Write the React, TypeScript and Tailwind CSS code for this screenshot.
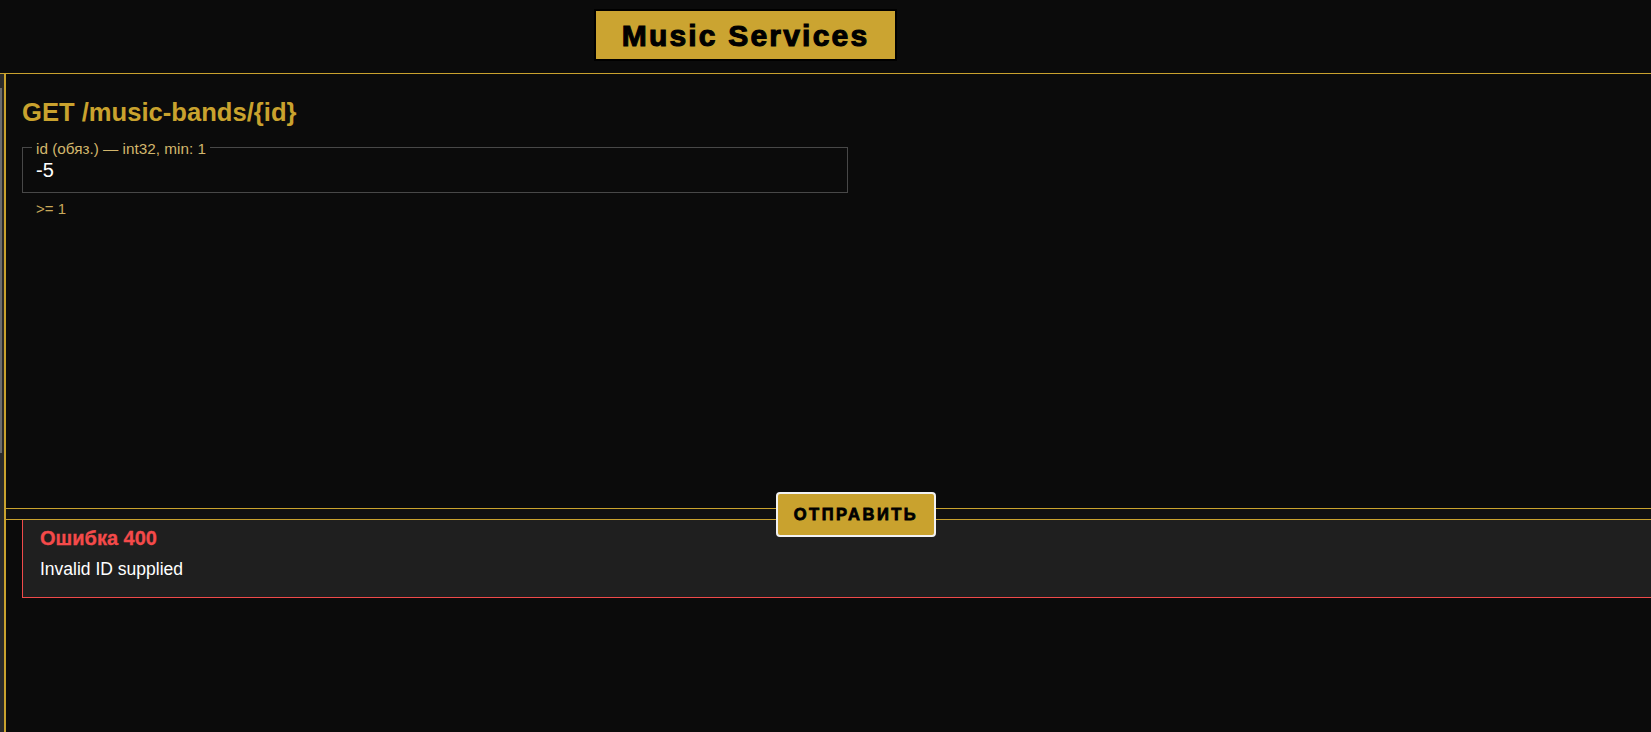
export default function App() {
  return (
    <div className="min-h-screen overflow-hidden bg-[#0b0b0b] font-['Liberation_Sans',Arial,sans-serif]">
      <header className="h-[73px] pt-[9px]">
        <div className="ml-[594px] flex h-[52px] w-[303px] items-center justify-center border-2 border-black bg-[#cba431]">
          <h1 className="text-[30px] font-bold tracking-[2.2px] text-black [-webkit-text-stroke:1.1px_#000]">
            Music Services
          </h1>
        </div>
      </header>

      <div className="flex h-[659px] border-t border-[#c9a22e]">
        {/* sidebar scrollbar */}
        <div className="w-[4px] bg-[#2b2b2b] pt-[14px]">
          <div className="h-[365px] w-[2px] bg-[#6b6b6b]" />
        </div>

        <main className="flex flex-1 flex-col border-l-2 border-[#c9a22e]">
          <section className="h-[434px] pl-[16px] pt-[23px]">
            <h2 className="text-[25.6px] font-bold leading-[30px] text-[#c9a22e]">
              GET /music-bands/{"{id}"}
            </h2>

            <fieldset className="mt-[10px] w-[826px] border border-[#484848] pb-[8px] pl-[9px]">
              <legend className="px-[4px] pt-[4px] text-[15.3px] leading-[16px] text-[#d2b66c]">
                id (обяз.) — int32, min: 1
              </legend>
              <input
                value="-5"
                readOnly
                className="mt-[1px] h-[24px] w-full bg-transparent pl-[4px] text-[20px] text-white outline-none"
              />
            </fieldset>

            <p className="mt-[7px] pl-[14px] text-[15px] leading-[17px] text-[#c9a95a]">
              &gt;= 1
            </p>
          </section>

          <div className="flex h-[12px] items-center border-y border-[#c9a22e] bg-[#111111]">
            <button className="relative z-10 ml-[770px] h-[45px] w-[160px] rounded-[4px] border-2 border-[#f2f2f2] bg-[#c9a22e] text-[16.5px] font-bold tracking-[2.5px] text-black [-webkit-text-stroke:0.8px_#000]">
              ОТПРАВИТЬ
            </button>
          </div>

          <div className="ml-[16px] border-b border-l border-[#f04a4a] bg-[#1f1f1f] pb-[18px] pl-[17px] pt-[7px]">
            <h3 className="text-[20px] font-bold leading-[22px] text-[#f44a4a] [-webkit-text-stroke:0.3px_#f44a4a]">
              Ошибка 400
            </h3>
            <p className="mt-[10px] text-[17.5px] leading-[20px] text-white">
              Invalid ID supplied
            </p>
          </div>
        </main>
      </div>
    </div>
  );
}
